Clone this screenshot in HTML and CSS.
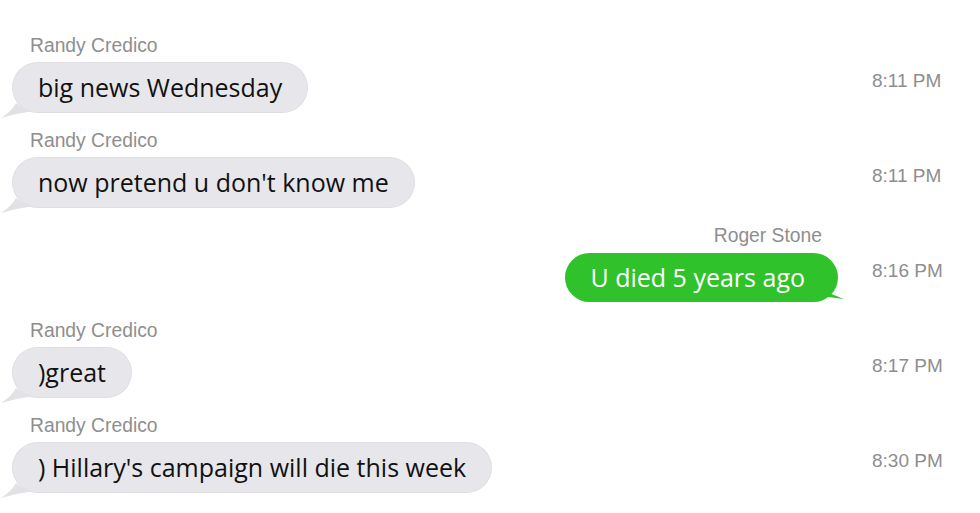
FILE: index.html
```html
<!DOCTYPE html>
<html lang="en">
<head>
  <meta charset="UTF-8" />
  <title>Messages</title>
  <link rel="stylesheet" href="styles.css">
</head>
<body>
  <div class="thread">
    <div class="row">
      <div class="msg in">
        <div class="name">Randy Credico</div>
        <div class="bubble">big news Wednesday
          <svg class="tail" width="40" height="20" viewBox="0 0 40 20"><path d="M16 0 Q22 6 34 8 Q18 10 1 15 Q12 8 16 0 Z" /></svg>
        </div>
      </div>
      <div class="time">8:11 PM</div>
    </div>

    <div class="row">
      <div class="msg in">
        <div class="name">Randy Credico</div>
        <div class="bubble">now pretend u don't know me
          <svg class="tail" width="40" height="20" viewBox="0 0 40 20"><path d="M16 0 Q22 6 34 8 Q18 10 1 15 Q12 8 16 0 Z" /></svg>
        </div>
      </div>
      <div class="time">8:11 PM</div>
    </div>

    <div class="row">
      <div class="msg out">
        <div class="name">Roger Stone</div>
        <div class="bubble">U died 5 years ago
          <svg class="tail" width="40" height="20" viewBox="0 0 40 20"><path d="M12 0 Q18 4 34 10 Q18 8 2 6 Q10 4 12 0 Z" /></svg>
        </div>
      </div>
      <div class="time">8:16 PM</div>
    </div>

    <div class="row">
      <div class="msg in">
        <div class="name">Randy Credico</div>
        <div class="bubble">)great
          <svg class="tail" width="40" height="20" viewBox="0 0 40 20"><path d="M16 0 Q22 6 34 8 Q18 10 1 15 Q12 8 16 0 Z" /></svg>
        </div>
      </div>
      <div class="time">8:17 PM</div>
    </div>

    <div class="row">
      <div class="msg in">
        <div class="name">Randy Credico</div>
        <div class="bubble">) Hillary's campaign will die this week
          <svg class="tail" width="40" height="20" viewBox="0 0 40 20"><path d="M16 0 Q22 6 34 8 Q18 10 1 15 Q12 8 16 0 Z" /></svg>
        </div>
      </div>
      <div class="time">8:30 PM</div>
    </div>
  </div>
</body>
</html>
```

FILE: styles.css
```css
body {
  margin: 0;
  background: #fff;
  font-family: "Liberation Sans", Arial, sans-serif;
}

.thread {
  padding-top: 33px;
}

.row {
  display: grid;
  grid-template-columns: 872px 1fr;
  height: 95px;
}

.msg {
  display: flex;
  flex-direction: column;
}

.msg.in {
  align-items: flex-start;
  padding-left: 13px;
}

.msg.out {
  align-items: flex-end;
  padding-right: 34px;
}

.name {
  font-size: 19.3px;
  line-height: 26px;
  color: #8e8e8e;
  margin-bottom: 4px;
}

.msg.in .name {
  padding-left: 17px;
}

.msg.out .name {
  padding-right: 16px;
}

.bubble {
  position: relative;
  font-family: "Open Sans", "Noto Sans", sans-serif;
  font-size: 25px;
  line-height: 33px;
  padding: 8px 25px;
  border-radius: 25px;
  white-space: nowrap;
}

.msg.in .bubble {
  background: #e7e7eb;
  color: #111;
  box-shadow: 0 0 0 1px #dfdfe3;
}

.msg.out .bubble {
  background: #30c22a;
  color: #fff;
  padding-right: 33px;
}

.tail {
  position: absolute;
}

.msg.in .tail {
  left: -13px;
  bottom: -11px;
  fill: #e2e2e6;
}

.msg.out .tail {
  right: -12px;
  bottom: -7px;
  fill: #30c22a;
}

.time {
  font-size: 19px;
  line-height: 26px;
  color: #8e8e8e;
  padding-top: 35px;
}
```
